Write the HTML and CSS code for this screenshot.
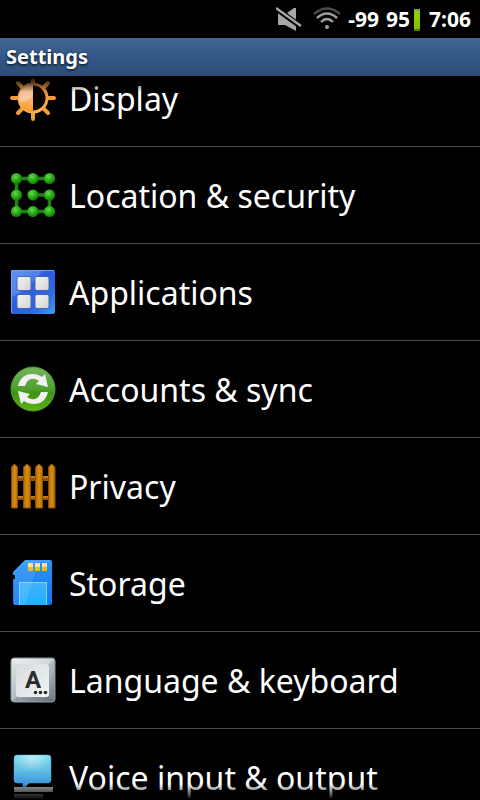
FILE: index.html
```
<!DOCTYPE html>
<html lang="en">
<head>
  <meta charset="UTF-8">
  <meta name="viewport" content="width=device-width, initial-scale=1.0">
  <title>Settings</title>
  <link rel="stylesheet" href="styles.css">
</head>
<body>
  <div class="status-bar">
    <svg class="mute" width="26" height="24" viewBox="0 0 26 24">
      <path fill="#a6a6a6" d="M2 5V18H9L20 24V1H18L11 6Z"/>
      <path stroke="#000" stroke-width="5.5" d="M-2 0L27 21"/>
      <path fill="#000" d="M2 3L12 10L11 5L6 2Z"/>
      <path stroke="#a6a6a6" stroke-width="2.4" d="M0 1L25 19"/>
    </svg>
    <svg class="wifi" width="28" height="24" viewBox="0 0 28 24" fill="none" stroke-width="2.4">
      <path stroke="#4a4a4a" d="M1 7Q14 -4 27 7"/>
      <path stroke="#a0a0a0" d="M4 11Q14 2 24 11M8 15Q14 9 20 15"/>
      <circle cx="14" cy="20" r="2" fill="#a0a0a0"/>
    </svg>
    <span class="signal">-99</span>
    <span class="charge">95</span>
    <span class="battery"></span>
    <span class="clock">7:06</span>
  </div>

  <header class="title-bar">
    <h1>Settings</h1>
  </header>

  <main class="list-view">
    <ul class="settings">
      <li>
        <a href="#display">
          <svg class="icon" viewBox="0 0 48 48">
            <defs>
              <linearGradient id="sun" x1="0" y1="0" x2="0" y2="1">
                <stop offset="0" stop-color="#e58a3a"/>
                <stop offset="1" stop-color="#ffb450"/>
              </linearGradient>
              <linearGradient id="sunFill" x1="0" y1="0" x2="0" y2="1">
                <stop offset="0" stop-color="#d98d55"/>
                <stop offset="0.5" stop-color="#f8b478"/>
                <stop offset="1" stop-color="#ff9a20"/>
              </linearGradient>
            </defs>
            <g stroke="#f49a38" stroke-width="4" stroke-linecap="round">
              <path d="M24 6V9M24 39V45M3 24H9M39 24H45M9 9L13 13M35 35L39 39M39 9L35 13M13 35L9 39"/>
            </g>
            <circle cx="24" cy="24" r="14" fill="#080400" stroke="url(#sun)" stroke-width="3"/>
            <path fill="url(#sunFill)" d="M24 9.5A14.5 14.5 0 0 0 24 38.5Z"/>
            <path fill="#fff" opacity=".3" d="M24 11A13 13 0 0 0 11 28Q20 28 24 21Z"/>
          </svg>
          <span>Display</span>
        </a>
      </li>
      <li>
        <a href="#security">
          <svg class="icon" viewBox="0 0 48 48">
            <defs>
              <radialGradient id="dot" cx=".4" cy=".35" r=".65">
                <stop offset="0" stop-color="#62dc4c"/>
                <stop offset="0.5" stop-color="#2eb01c"/>
                <stop offset="1" stop-color="#187808"/>
              </radialGradient>
            </defs>
            <path fill="none" stroke="#237f16" stroke-width="3.6" d="M40.5 7.5H7.5V40.5H40.5V24H24"/>
            <g fill="url(#dot)">
              <circle cx="7.5" cy="7.5" r="5.6"/>
              <circle cx="24" cy="7.5" r="5.6"/>
              <circle cx="40.5" cy="7.5" r="5.6"/>
              <circle cx="7.5" cy="24" r="5.6"/>
              <circle cx="24" cy="24" r="5.6"/>
              <circle cx="40.5" cy="24" r="5.6"/>
              <circle cx="7.5" cy="40.5" r="5.6"/>
              <circle cx="24" cy="40.5" r="5.6"/>
              <circle cx="40.5" cy="40.5" r="5.6"/>
            </g>
          </svg>
          <span>Location &amp; security</span>
        </a>
      </li>
      <li>
        <a href="#applications">
          <svg class="icon" viewBox="0 0 48 48">
            <defs>
              <linearGradient id="tile" x1="0" y1="0" x2="1" y2="1">
                <stop offset="0" stop-color="#4c84ec"/>
                <stop offset="0.45" stop-color="#2c5ee0"/>
                <stop offset="0.7" stop-color="#2c68e4"/>
                <stop offset="1" stop-color="#38a0f0"/>
              </linearGradient>
              <linearGradient id="cell" x1="0" y1="0" x2="1" y2="1">
                <stop offset="0" stop-color="#f4f4f4"/>
                <stop offset="1" stop-color="#d4d4d4"/>
              </linearGradient>
            </defs>
            <rect x="2" y="2" width="44" height="44" rx="2" fill="url(#tile)"/>
            <path fill="#8fbcff" opacity=".3" d="M3 3H33Q22 20 3 29Z"/>
            <path fill="none" stroke="#6aa2f4" d="M2.5 45V2.5H45"/>
            <g fill="url(#cell)" stroke="#4a66a8">
              <rect x="8" y="8.5" width="14" height="14" rx="2"/>
              <rect x="26" y="8.5" width="14" height="14" rx="2"/>
              <rect x="8" y="26.5" width="14" height="14" rx="2"/>
              <rect x="26" y="26.5" width="14" height="14" rx="2"/>
            </g>
          </svg>
          <span>Applications</span>
        </a>
      </li>
      <li>
        <a href="#accounts">
          <svg class="icon" viewBox="0 0 48 48">
            <defs>
              <linearGradient id="ball" x1="0" y1="0" x2="0" y2="1">
                <stop offset="0" stop-color="#74b45c"/>
                <stop offset="0.5" stop-color="#4ea02e"/>
                <stop offset="0.6" stop-color="#3e9412"/>
                <stop offset="1" stop-color="#5cb416"/>
              </linearGradient>
            </defs>
            <circle cx="24" cy="24" r="22" fill="url(#ball)" stroke="#4f9a36" stroke-width="1"/>
            <path fill="#f0f0f0" d="M9 21Q12 9 23 9Q29 9 33 12L36 9L39 22L27 19L30 16Q26 13 22 14Q18 15 16 21Z"/>
            <path fill="#f0f0f0" d="M39 27Q36 39 25 39Q19 39 15 36L12 39L9 26L21 29L18 32Q22 35 26 34Q30 33 32 27Z"/>
          </svg>
          <span>Accounts &amp; sync</span>
        </a>
      </li>
      <li>
        <a href="#privacy">
          <svg class="icon" viewBox="0 0 48 48">
            <defs>
              <linearGradient id="wood" x1="0" y1="0" x2="1" y2="0">
                <stop offset="0" stop-color="#b06804"/>
                <stop offset="0.5" stop-color="#d98e10"/>
                <stop offset="1" stop-color="#b56c06"/>
              </linearGradient>
            </defs>
            <path fill="#8a5410" d="M5 14H43V19H5ZM5 34H43V38H5Z"/>
            <path fill="#bd7b24" d="M5 14H43V16H5ZM5 34H43V36H5Z"/>
            <g fill="url(#wood)" stroke="#8a4e04">
              <path d="M2.5 46V5L5.5 2L8.5 5V46Z"/>
              <path d="M14.5 46V5L18 2L21.5 5V46Z"/>
              <path d="M26.5 46V5L30 2L33.5 5V46Z"/>
              <path d="M39.5 46V5L42.5 2L46 5V46Z"/>
            </g>
          </svg>
          <span>Privacy</span>
        </a>
      </li>
      <li>
        <a href="#storage">
          <svg class="icon" viewBox="0 0 48 48">
            <defs>
              <linearGradient id="card" x1="0" y1="0" x2="0" y2="1">
                <stop offset="0" stop-color="#2c92f6"/>
                <stop offset="1" stop-color="#1078f4"/>
              </linearGradient>
              <linearGradient id="label" x1="0" y1="0" x2="0" y2="1">
                <stop offset="0" stop-color="#44b2fa"/>
                <stop offset="1" stop-color="#1fb0ff"/>
              </linearGradient>
              <linearGradient id="gold" x1="0" y1="0" x2="0" y2="1">
                <stop offset="0.5" stop-color="#ffe680"/>
                <stop offset="0.5" stop-color="#f4b81c"/>
              </linearGradient>
            </defs>
            <path fill="url(#card)" d="M16 1H41Q43 1 43 3V44Q43 46 41 46H6Q4 46 4 44V20H6V16H4V13Z"/>
            <path fill="none" stroke="#4cacff" d="M5 15V13L16 2H41"/>
            <rect x="10" y="23" width="28" height="23" fill="url(#label)"/>
            <path fill="none" stroke="#7cd0ff" d="M10.5 46V23.5H37.5V46"/>
            <path fill="#fff" opacity=".1" d="M16 2H30L16 46H5V13Z"/>
            <g fill="url(#gold)">
              <rect x="19" y="4" width="5" height="8"/>
              <rect x="26" y="4" width="5" height="8"/>
              <rect x="33" y="4" width="5" height="8"/>
            </g>
          </svg>
          <span>Storage</span>
        </a>
      </li>
      <li>
        <a href="#language">
          <svg class="icon" viewBox="0 0 48 48">
            <defs>
              <linearGradient id="key" x1="0" y1="0" x2="1" y2="1">
                <stop offset="0" stop-color="#e4e8ea"/>
                <stop offset="0.6" stop-color="#a9b4b8"/>
                <stop offset="1" stop-color="#66767e"/>
              </linearGradient>
              <linearGradient id="cap" x1="0" y1="0" x2="1" y2="1">
                <stop offset="0" stop-color="#d6dbde"/>
                <stop offset="1" stop-color="#f2f4f4"/>
              </linearGradient>
            </defs>
            <rect x="2" y="2" width="44" height="44" rx="3" fill="url(#key)" stroke="#8a979c"/>
            <path fill="#fff" opacity=".4" d="M3 3H45L40 8H8Z"/>
            <path fill="#506068" opacity=".3" d="M3 45L8 41H40L45 45Z"/>
            <rect x="7" y="8" width="33" height="33" rx="3" fill="url(#cap)"/>
            <text class="key-letter" x="24" y="32" text-anchor="middle">A</text>
            <g fill="#2c2c2c">
              <circle cx="26.5" cy="36.5" r="1.8"/>
              <circle cx="31.5" cy="36.5" r="1.8"/>
              <circle cx="36.5" cy="36.5" r="1.8"/>
            </g>
          </svg>
          <span>Language &amp; keyboard</span>
        </a>
      </li>
      <li>
        <a href="#voice">
          <svg class="icon" viewBox="0 0 48 48">
            <defs>
              <linearGradient id="bubble" x1="0" y1="0" x2="0" y2="1">
                <stop offset="0" stop-color="#7cdcf2"/>
                <stop offset="0.45" stop-color="#62bfe2"/>
                <stop offset="1" stop-color="#3184d8"/>
              </linearGradient>
              <radialGradient id="shine" cx=".5" cy=".1" r=".5">
                <stop offset="0" stop-color="#fff" stop-opacity=".5"/>
                <stop offset="1" stop-color="#fff" stop-opacity="0"/>
              </radialGradient>
            </defs>
            <rect x="5" y="34" width="39" height="5" fill="#a5a5a5"/>
            <rect x="5" y="41" width="29" height="5" fill="#8a8a8a"/>
            <path fill="url(#bubble)" stroke="#48a8dc" stroke-width=".5" d="M8 2H39Q42 2 42 5V27Q42 30 39 30H20L14 36V30H8Q5 30 5 27V5Q5 2 8 2Z"/>
            <rect x="5" y="2" width="37" height="28" rx="3" fill="url(#shine)"/>
          </svg>
          <span>Voice input &amp; output</span>
        </a>
      </li>
    </ul>
  </main>
</body>
</html>
```
FILE: styles.css
```
* {
  box-sizing: border-box;
}

body {
  margin: 0;
  height: 100vh;
  display: flex;
  flex-direction: column;
  overflow: hidden;
  background: #000;
  color: #fff;
  font-family: 'Noto Sans', 'Open Sans', sans-serif;
}

.status-bar {
  flex: none;
  display: flex;
  align-items: center;
  justify-content: flex-end;
  height: 38px;
  padding-right: 9px;
  font-size: 21px;
  line-height: 38px;
  font-weight: bold;
}

.wifi {
  margin: 0 7px 0 11px;
}

.charge {
  margin-left: 7px;
}

.battery {
  width: 6px;
  height: 22px;
  margin: 2px 9px 0 4px;
  background: linear-gradient(#8a9a70 0, #8a9a70 2px, #92d000 2px, #86be00 20px, #567a00 20px);
}

.title-bar {
  flex: none;
  height: 38px;
  padding: 0 6px;
  background: linear-gradient(#41668f, #34588a 50%, #2d4d75);
}

.title-bar h1 {
  margin: 0;
  font-size: 20px;
  line-height: 38px;
  font-weight: bold;
  text-shadow: 0 1px 3px #000;
}

.list-view {
  flex: 1;
  min-height: 0;
  overflow: hidden;
  position: relative;
}

/* fading edges while scrolled */
.list-view::before,
.list-view::after {
  content: '';
  position: absolute;
  left: 0;
  right: 0;
  height: 16px;
  z-index: 1;
  pointer-events: none;
}

.list-view::before {
  top: 0;
  background: linear-gradient(#000, transparent);
}

.list-view::after {
  bottom: 0;
  background: linear-gradient(transparent, #000);
}

.settings {
  list-style: none;
  margin: -26px 0 0;
  padding: 0;
}

.settings a {
  display: flex;
  align-items: center;
  gap: 12px;
  height: 97px;
  padding: 0 9px;
  border-bottom: 1px solid #4c4c4c;
  color: #fff;
  font-size: 32px;
  line-height: 40px;
  text-decoration: none;
  white-space: nowrap;
}

.settings span {
  padding-top: 2px;
}

.icon {
  flex: none;
  width: 48px;
  height: 48px;
}

.key-letter {
  font-family: Roboto, sans-serif;
  font-size: 24px;
  font-weight: bold;
  fill: #2c2c2c;
}
```
